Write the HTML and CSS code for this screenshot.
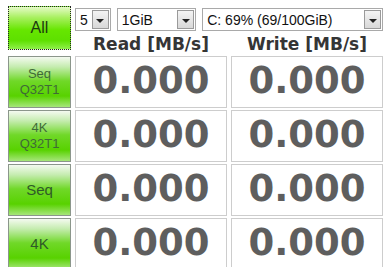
FILE: index.html
```html
<!DOCTYPE html>
<html>
<head>
<meta charset="utf-8">
<link rel="stylesheet" href="styles.css">
</head>
<body>
<div class="app">
  <div class="btn btn-all"><span>All</span></div>
  <div class="top">
    <div class="selects">
      <div class="sel sel-count"><span class="val">5</span><span class="arrow"></span></div>
      <div class="sel sel-size"><span class="val">1GiB</span><span class="arrow"></span></div>
      <div class="sel sel-drive"><span class="val">C: 69% (69/100GiB)</span><span class="arrow"></span></div>
    </div>
    <div class="heads">
      <div class="head">Read [MB/s]</div>
      <div class="head">Write [MB/s]</div>
    </div>
  </div>

  <div class="btn btn-row"><span>Seq<br>Q32T1</span></div>
  <div class="cell">0.000</div>
  <div class="cell">0.000</div>

  <div class="btn btn-row"><span>4K<br>Q32T1</span></div>
  <div class="cell">0.000</div>
  <div class="cell">0.000</div>

  <div class="btn btn-row big"><span>Seq</span></div>
  <div class="cell">0.000</div>
  <div class="cell">0.000</div>

  <div class="btn btn-row big"><span>4K</span></div>
  <div class="cell">0.000</div>
  <div class="cell">0.000</div>
</div>
</body>
</html>
```

FILE: styles.css
```css
html, body {
  margin: 0;
  padding: 0;
  background: #ffffff;
  overflow: hidden;
}
body {
  width: 383px;
  height: 267px;
}
.app {
  display: grid;
  grid-template-columns: 63px 152px 152px;
  grid-template-rows: 48px 52px 52px 52px 52px;
  column-gap: 4px;
  row-gap: 2px;
  padding: 6px 0 0 8px;
}
.app > .btn-all {
  margin-bottom: 4px;
}
.top {
  grid-column: 2 / 4;
  display: flex;
  flex-direction: column;
  margin-bottom: 4px;
}
.selects {
  display: flex;
  gap: 6px;
  margin-top: 2px;
  height: 23px;
}
.sel {
  box-sizing: border-box;
  height: 23px;
  border: 1px solid #a9a9a9;
  background: #fff;
  display: flex;
  align-items: center;
  font-family: "Liberation Sans", Arial, sans-serif;
  font-size: 14px;
  color: #111;
}
.sel .val {
  flex: 1;
  padding-left: 4px;
  white-space: nowrap;
  overflow: hidden;
}
.sel .arrow {
  box-sizing: border-box;
  width: 17px;
  height: 19px;
  margin-right: 1px;
  background: linear-gradient(#f4f4f4, #d8d8d8);
  border: 1px solid #9a9a9a;
  display: flex;
  align-items: center;
  justify-content: center;
}
.sel .arrow::after {
  content: "";
  border-left: 4px solid transparent;
  border-right: 4px solid transparent;
  border-top: 4px solid #222;
  margin-top: 2px;
}
.sel-count { width: 36px; }
.sel-size { width: 80px; }
.sel-drive { width: 182px; }
.heads {
  display: grid;
  grid-template-columns: 152px 152px;
  column-gap: 4px;
  margin-top: 3px;
}
.head {
  text-align: center;
  font-family: "DejaVu Sans", Verdana, sans-serif;
  font-weight: bold;
  font-size: 17px;
  color: #353535;
  line-height: 20px;
}
.btn {
  box-sizing: border-box;
  display: flex;
  align-items: center;
  justify-content: center;
  text-align: center;
  font-family: "Liberation Sans", Arial, sans-serif;
}
.btn-all {
  border: 1px dotted #222;
  background: linear-gradient(#e6fbc8 0%, #a8f060 25%, #66e600 55%, #5ee000 80%, #8ff04a 100%);
  color: #1c3a10;
  font-size: 16px;
}
.btn-row {
  border: 1px solid #8b968b;
  background: linear-gradient(#f4faf0 0%, #c4ecae 20%, #70d828 48%, #58d200 78%, #a6e67a 100%);
  color: #3f6a38;
  font-size: 13px;
  line-height: 16px;
}
.btn-row.big {
  font-size: 15px;
  color: #2f5a28;
}
.cell {
  box-sizing: border-box;
  border: 1px solid #cdcdcd;
  background: #fff;
  display: flex;
  align-items: center;
  justify-content: center;
  padding-bottom: 3px;
  font-family: "DejaVu Sans", Verdana, sans-serif;
  font-weight: bold;
  font-size: 37px;
  color: #5e5e5e;
  line-height: 1;
}
```
